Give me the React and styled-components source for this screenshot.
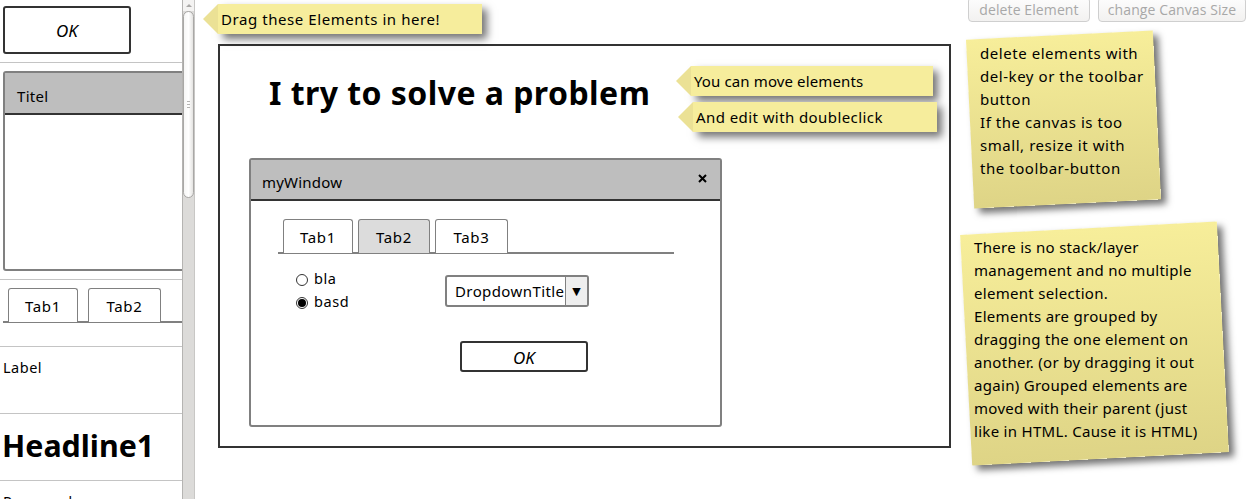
import React from "react";
import styled, { createGlobalStyle } from "styled-components";

const comic = `"Comic Sans MS", "Noto Sans", sans-serif`;

const Global = createGlobalStyle`
  html, body {
    margin: 0;
    padding: 0;
    background: #fff;
    overflow: hidden;
  }
  * {
    box-sizing: border-box;
  }
`;

const Page = styled.div`
  display: flex;
  width: 1249px;
  height: 499px;
  overflow: hidden;
  font-family: ${comic};
  color: #000;
`;

/* left palette */
const Sidebar = styled.aside`
  display: flex;
  flex: none;
  width: 196px;
  height: 499px;
  overflow: hidden;
`;
const Palette = styled.div`
  width: 182px;
  flex: none;
  overflow: hidden;
`;
const PaletteItem = styled.div`
  height: ${(p) => p.$h}px;
  padding-left: 3px;
  border-bottom: 1px solid #c4c4c4;
  overflow: hidden;

  &:last-child {
    border-bottom: none;
  }
`;
const Scrollbar = styled.div`
  width: 13px;
  flex: none;
  background: #dcdbd9;
  border-left: 1px solid #b5b4b2;
  border-right: 1px solid #c8c7c5;
`;
const ScrollUp = styled.div`
  display: flex;
  justify-content: center;
  height: 11px;
  padding-top: 4px;
  background: #f4f3f2;

  &::after {
    content: "";
    height: 0;
    border-style: solid;
    border-width: 0 3px 3px;
    border-color: transparent transparent #a9a8a6;
  }
`;
const ScrollThumb = styled.div`
  display: flex;
  align-items: center;
  justify-content: center;
  height: 187px;
  border: 1px solid #a9a8a6;
  border-radius: 7px;
  background: linear-gradient(90deg, #f6f6f5, #fff 50%, #e4e3e1);

  &::after {
    content: "";
    width: 3px;
    height: 5px;
    border-top: 1px solid #b5b4b2;
    border-bottom: 1px solid #b5b4b2;
    background: linear-gradient(#b5b4b2, #b5b4b2) center / 100% 1px no-repeat;
  }
`;
const ActionButton = styled.div`
  display: flex;
  align-items: center;
  justify-content: center;
  width: ${(p) => p.$w}px;
  height: ${(p) => p.$h}px;
  padding-top: 1px;
  border: 2px solid #333;
  border-radius: 3px;
  background: #fff;
  font-size: 17px;
  font-style: italic;
`;
const SideOk = styled(ActionButton)`
  margin-top: 6px;
`;
const ListPanel = styled.div`
  width: 190px;
  height: 200px;
  margin-top: 8px;
  border: 2px solid #808080;
  border-radius: 3px;
`;
const ListHeader = styled.div`
  height: 42px;
  padding: 5px 0 0 12px;
  display: flex;
  align-items: center;
  background: #bebebe;
  border-bottom: 2px solid #333;
  font-size: 15px;
  letter-spacing: 0.3px;
`;
const TabStrip = styled.div`
  display: flex;
  align-items: flex-end;
  height: ${(p) => p.$h}px;
  width: ${(p) => p.$w}px;
  padding-left: ${(p) => p.$inset}px;
  gap: ${(p) => p.$gap}px;
  border-bottom: 2px solid #808080;
`;
const Tab = styled.div`
  display: flex;
  align-items: center;
  justify-content: center;
  width: ${(p) => p.$w}px;
  height: 34px;
  margin-bottom: -1px;
  border: 1px solid #808080;
  border-bottom: none;
  border-radius: 3px 3px 0 0;
  background: ${(p) => (p.$active ? "#dcdcdc" : "#fff")};
  font-size: 15px;
  letter-spacing: 0.6px;
`;
const SideLabel = styled.div`
  padding-top: 10px;
  font-size: 14.5px;
  line-height: 20px;
  letter-spacing: 0.5px;
`;
const Headline = styled.div`
  padding-top: 11px;
  margin-left: -1px;
  font-size: 30.4px;
  line-height: 42px;
  font-weight: 700;
`;

/* middle: hint and canvas */
const Workspace = styled.main`
  flex: none;
  width: 764px;
  padding: 4px 0 0 22px;
`;
const Hint = styled.div`
  position: ${(p) => (p.$x ? "absolute" : "relative")};
  left: ${(p) => p.$x}px;
  top: ${(p) => p.$y}px;
  display: flex;
  align-items: center;
  width: ${(p) => p.$w}px;
  height: 30px;
  padding-left: 3px;
  background: #f6ed9c;
  box-shadow: 5px 5px 8px rgba(0, 0, 0, 0.55);
  font-size: 15px;
  letter-spacing: ${(p) => p.$track}px;
  white-space: nowrap;
  z-index: 2;

  &::before {
    content: "";
    position: absolute;
    left: -15px;
    top: 0;
    border-style: solid;
    border-width: 15px 15px 15px 0;
    border-color: transparent #ebe195 transparent transparent;
  }
`;
const Canvas = styled.section`
  position: relative;
  width: 733px;
  height: 404px;
  margin-top: 10px;
  border: 2px solid #333;
`;
const CanvasTitle = styled.h1`
  position: absolute;
  left: 49px;
  top: 24px;
  margin: 0;
  font-size: 32px;
  line-height: 46px;
  font-weight: 700;
  letter-spacing: 0.45px;
  white-space: nowrap;
`;
const Window = styled.div`
  position: absolute;
  left: 29px;
  top: 112px;
  width: 473px;
  height: 269px;
  border: 2px solid #808080;
  border-radius: 3px;
`;
const WindowHeader = styled.div`
  display: flex;
  align-items: center;
  justify-content: space-between;
  height: 41px;
  padding: 5px 13px 0 11px;
  background: #bebebe;
  border-bottom: 2px solid #333;
  font-size: 15px;
  letter-spacing: 0.2px;
`;
const CloseIcon = styled.svg`
  width: 9px;
  height: 9px;
  margin-bottom: 8px;
`;
const WindowBody = styled.div`
  padding-left: 27px;
`;
const FormRow = styled.div`
  display: flex;
  margin-top: 14px;
  padding-left: 18px;
`;
const RadioGroup = styled.div`
  display: flex;
  flex-direction: column;
  gap: 3px;
  width: 149px;
`;
const RadioRow = styled.label`
  display: flex;
  align-items: center;
  gap: 6px;
  height: 20px;
  font-size: 14.5px;
  letter-spacing: 0.6px;
`;
const RadioDot = styled.span`
  display: flex;
  align-items: center;
  justify-content: center;
  width: 12px;
  height: 12px;
  margin-top: 3px;
  border: 1px solid #333;
  border-radius: 50%;
  background: #fff;

  &::after {
    content: "";
    width: 8px;
    height: 8px;
    border-radius: 50%;
    background: ${(p) => (p.$on ? "#000" : "transparent")};
  }
`;
const Dropdown = styled.div`
  display: flex;
  width: 144px;
  height: 32px;
  margin-top: 7px;
  border: 2px solid #808080;
  border-radius: 3px;
  overflow: hidden;
`;
const DropdownTitle = styled.div`
  flex: 1;
  display: flex;
  align-items: center;
  padding-left: 8px;
  font-size: 15px;
  letter-spacing: 0.4px;
  white-space: nowrap;
  overflow: hidden;
`;
const DropdownArrow = styled.div`
  display: flex;
  align-items: center;
  justify-content: center;
  width: 22px;
  flex: none;
  background: #eee;
  border-left: 1px solid #808080;
  font-size: 11px;
  font-family: "DejaVu Sans", sans-serif;
`;
const OkSlot = styled.div`
  padding: 30px 0 0 182px;
`;

/* right column */
const Side = styled.div`
  flex: none;
  width: 289px;
`;
const Toolbar = styled.div`
  display: flex;
  gap: 8px;
  margin-top: -3px;
  padding-left: 8px;
`;
const ToolButton = styled.button`
  width: ${(p) => p.$w}px;
  height: 25px;
  padding: 0;
  border: 1px solid #cfcfcf;
  border-radius: 4px;
  background: linear-gradient(#fdfdfd, #f2f1f0);
  color: #a8a8a8;
  font-family: "Open Sans", sans-serif;
  font-size: 14px;
  letter-spacing: 0.1px;
`;
const Note = styled.div`
  position: relative;
  isolation: isolate;
  width: ${(p) => p.$w}px;
  height: ${(p) => p.$h}px;
  margin: ${(p) => p.$m};
  padding: ${(p) => p.$pad};
  font-size: 15px;
  line-height: 23px;
  letter-spacing: ${(p) => p.$track}px;
  white-space: nowrap;

  &::before {
    content: "";
    position: absolute;
    inset: 0;
    z-index: -1;
    transform: rotate(${(p) => p.$tilt}deg);
    background: linear-gradient(#f7ee9a, #ded486);
    box-shadow: 5px 5px 7px rgba(0, 0, 0, 0.55);
  }
`;

const App = () => {
  return (
    <Page>
      <Global />
      <Sidebar>
        <Palette>
          <PaletteItem $h={63}>
            <SideOk $w={128} $h={48}>OK</SideOk>
          </PaletteItem>
          <PaletteItem $h={217}>
            <ListPanel>
              <ListHeader>Titel</ListHeader>
            </ListPanel>
          </PaletteItem>
          <PaletteItem $h={67}>
            <TabStrip $h={43} $w={180} $inset={5} $gap={10}>
              <Tab $w={70}>Tab1</Tab>
              <Tab $w={73}>Tab2</Tab>
            </TabStrip>
          </PaletteItem>
          <PaletteItem $h={67}>
            <SideLabel>Label</SideLabel>
          </PaletteItem>
          <PaletteItem $h={67}>
            <Headline>Headline1</Headline>
          </PaletteItem>
          <PaletteItem $h={40}>
            <SideLabel>Password</SideLabel>
          </PaletteItem>
        </Palette>
        <Scrollbar>
          <ScrollUp />
          <ScrollThumb />
        </Scrollbar>
      </Sidebar>

      <Workspace>
        <Hint $w={264} $track={0.57}>Drag these Elements in here!</Hint>
        <Canvas>
          <CanvasTitle>I try to solve a problem</CanvasTitle>
          <Hint $x={471} $y={20} $w={242} $track={0.12}>You can move elements</Hint>
          <Hint $x={473} $y={56} $w={244} $track={0.42}>And edit with doubleclick</Hint>
          <Window>
            <WindowHeader>
              myWindow
              <CloseIcon viewBox="0 0 9 9">
                <path d="M1 1L8 8M8 1L1 8" stroke="#000" strokeWidth="2" />
              </CloseIcon>
            </WindowHeader>
            <WindowBody>
              <TabStrip $h={53} $w={396} $inset={5} $gap={5}>
                <Tab $w={70}>Tab1</Tab>
                <Tab $w={72} $active>Tab2</Tab>
                <Tab $w={73}>Tab3</Tab>
              </TabStrip>
              <FormRow>
                <RadioGroup>
                  <RadioRow><RadioDot />bla</RadioRow>
                  <RadioRow><RadioDot $on />basd</RadioRow>
                </RadioGroup>
                <Dropdown>
                  <DropdownTitle>DropdownTitle</DropdownTitle>
                  <DropdownArrow>▼</DropdownArrow>
                </Dropdown>
              </FormRow>
              <OkSlot>
                <ActionButton $w={128} $h={31}>OK</ActionButton>
              </OkSlot>
            </WindowBody>
          </Window>
        </Canvas>
      </Workspace>

      <Side>
        <Toolbar>
          <ToolButton $w={122}>delete Element</ToolButton>
          <ToolButton $w={148}>change Canvas Size</ToolButton>
        </Toolbar>
        <Note $w={187} $h={169} $m="13px 0 0 10px" $pad="7px 0 0 10px" $tilt={-2.8} $track={0.55}>
          delete elements with
          <br />
          del-key or the toolbar
          <br />
          button
          <br />
          If the canvas is too
          <br />
          small, resize it with
          <br />
          the toolbar-button
        </Note>
        <Note $w={257} $h={231} $m="24px 0 0 6px" $pad="8px 0 0 8px" $tilt={-3} $track={0.3}>
          There is no stack/layer
          <br />
          management and no multiple
          <br />
          element selection.
          <br />
          Elements are grouped by
          <br />
          dragging the one element on
          <br />
          another. (or by dragging it out
          <br />
          again) Grouped elements are
          <br />
          moved with their parent (just
          <br />
          like in HTML. Cause it is HTML)
        </Note>
      </Side>
    </Page>
  );
};

export default App;
